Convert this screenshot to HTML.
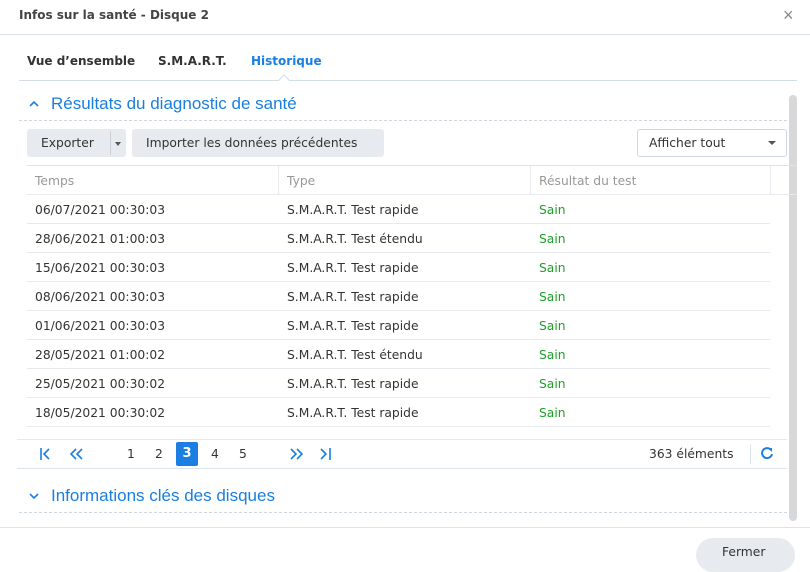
<!DOCTYPE html><html><head><style>
body{margin:0;width:810px;height:562px;background:#fff;font-family:"DejaVu Sans","Liberation Sans",sans-serif;position:relative;overflow:hidden;color:#333}
.a{position:absolute}
.t{font-size:12.3px;white-space:nowrap}
.row{position:absolute;left:27px;width:743px;height:28px;border-bottom:1px solid #e6eaee;font-size:12.3px;white-space:nowrap}
.row span{position:absolute;top:8px}
.h{font-family:"Liberation Sans",sans-serif;font-size:17px;color:#1a7fe0}
</style></head><body>
<div class="a t" style="left:19px;top:8px;font-weight:bold;color:#444;font-size:12px">Infos sur la santé - Disque 2</div>
<div class="a" style="left:783px;top:5px;font-size:18px;color:#888;font-family:'Liberation Sans'">×</div>
<div class="a" style="left:0;top:34px;width:810px;height:1px;background:#dde3ea"></div>
<div class="a t" style="left:27px;top:54px;font-weight:bold;color:#333;font-size:12px">Vue d’ensemble</div>
<div class="a t" style="left:158px;top:54px;font-weight:bold;color:#333;font-size:12px">S.M.A.R.T.</div>
<div class="a t" style="left:251px;top:54px;font-weight:bold;color:#1a7fe0;font-size:12px">Historique</div>
<div class="a" style="left:19px;top:80px;width:778px;height:1px;background:#d4dde6"></div>
<div class="a" style="left:280px;top:76px;width:7px;height:7px;background:#fff;border-left:1px solid #d4dde6;border-top:1px solid #d4dde6;transform:rotate(45deg)"></div>
<div class="a" style="left:789px;top:95px;width:8px;height:426px;background:#d8d8d8;border-radius:4px"></div>
<svg class="a" style="left:28px;top:99px" width="12" height="10"><path d="M2 7L6 3L10 7" stroke="#1a7fe0" stroke-width="1.6" fill="none"/></svg>
<div class="a h" style="left:51px;top:94px">Résultats du diagnostic de santé</div>
<div class="a" style="left:19px;top:120px;width:778px;border-top:1px dashed #cfd8e0"></div>
<div class="a" style="left:27px;top:129px;width:99px;height:28px;background:#e7ebef;border-radius:3px"></div>
<div class="a t" style="left:41px;top:136px;color:#333">Exporter</div>
<div class="a" style="left:110px;top:131px;width:1px;height:24px;background:#c8d0d8"></div>
<div class="a" style="left:115px;top:142px;border:3px solid transparent;border-top:4px solid #555"></div>
<div class="a" style="left:132px;top:129px;width:252px;height:28px;background:#e7ebef;border-radius:3px"></div>
<div class="a t" style="left:146px;top:136px">Importer les données précédentes</div>
<div class="a" style="left:637px;top:129px;width:148px;height:26px;border:1px solid #cfd7df;border-radius:3px"></div>
<div class="a t" style="left:649px;top:136px">Afficher tout</div>
<div class="a" style="left:768px;top:141px;border:4px solid transparent;border-top:4px solid #555"></div>
<div class="a" style="left:27px;top:165px;width:770px;height:1px;background:#dde3ea"></div>
<div class="row" style="top:166px;width:770px;color:#999"><span style="left:8px">Temps</span><span style="left:260px">Type</span><span style="left:512px">Résultat du test</span></div>
<div class="a" style="left:278px;top:166px;width:1px;height:29px;background:#e6eaee"></div>
<div class="a" style="left:530px;top:166px;width:1px;height:29px;background:#e6eaee"></div>
<div class="a" style="left:770px;top:166px;width:1px;height:29px;background:#e6eaee"></div>
<div class="row" style="top:195px"><span style="left:8px">06/07/2021 00:30:03</span><span style="left:260px">S.M.A.R.T. Test rapide</span><span style="left:512px;color:#1e9e2a">Sain</span></div>
<div class="row" style="top:224px"><span style="left:8px">28/06/2021 01:00:03</span><span style="left:260px">S.M.A.R.T. Test étendu</span><span style="left:512px;color:#1e9e2a">Sain</span></div>
<div class="row" style="top:253px"><span style="left:8px">15/06/2021 00:30:03</span><span style="left:260px">S.M.A.R.T. Test rapide</span><span style="left:512px;color:#1e9e2a">Sain</span></div>
<div class="row" style="top:282px"><span style="left:8px">08/06/2021 00:30:03</span><span style="left:260px">S.M.A.R.T. Test rapide</span><span style="left:512px;color:#1e9e2a">Sain</span></div>
<div class="row" style="top:311px"><span style="left:8px">01/06/2021 00:30:03</span><span style="left:260px">S.M.A.R.T. Test rapide</span><span style="left:512px;color:#1e9e2a">Sain</span></div>
<div class="row" style="top:340px"><span style="left:8px">28/05/2021 01:00:02</span><span style="left:260px">S.M.A.R.T. Test étendu</span><span style="left:512px;color:#1e9e2a">Sain</span></div>
<div class="row" style="top:369px"><span style="left:8px">25/05/2021 00:30:02</span><span style="left:260px">S.M.A.R.T. Test rapide</span><span style="left:512px;color:#1e9e2a">Sain</span></div>
<div class="row" style="top:398px"><span style="left:8px">18/05/2021 00:30:02</span><span style="left:260px">S.M.A.R.T. Test rapide</span><span style="left:512px;color:#1e9e2a">Sain</span></div>
<div class="a" style="left:17px;top:439px;width:770px;height:1px;background:#e6eaee"></div>
<div class="a" style="left:17px;top:468px;width:770px;height:1px;background:#dde3ea"></div>
<svg class="a" style="left:38px;top:446px" width="300" height="16" fill="none" stroke="#1a7fe0" stroke-width="1.6">
<path d="M3 2V14M11 3L6 8L11 13"/><path d="M38 3L33 8L38 13M44 3L39 8L44 13"/>
<path d="M253 3L258 8L253 13M259 3L264 8L259 13"/><path d="M283 3L288 8L283 13M292 2V14"/></svg>
<div class="a t" style="left:127px;top:447px">1</div>
<div class="a t" style="left:155px;top:447px">2</div>
<div class="a" style="left:176px;top:442px;width:22px;height:24px;background:#1a7fe0;border-radius:2px;color:#fff;font-size:13px;font-weight:bold;text-align:center;line-height:24px">3</div>
<div class="a t" style="left:211px;top:447px">4</div>
<div class="a t" style="left:239px;top:447px">5</div>
<div class="a t" style="left:649px;top:447px">363 éléments</div>
<div class="a" style="left:750px;top:444px;width:1px;height:20px;background:#dde3ea"></div>
<svg class="a" style="left:760px;top:446px" width="14" height="14"><path d="M11 4A5 5 0 1 0 12 8" stroke="#1a7fe0" stroke-width="2" fill="none"/><path d="M8 2L12 2L12 6Z" fill="#1a7fe0"/></svg>
<svg class="a" style="left:28px;top:491px" width="12" height="10"><path d="M2 3L6 7L10 3" stroke="#1a7fe0" stroke-width="1.6" fill="none"/></svg>
<div class="a h" style="left:51px;top:486px">Informations clés des disques</div>
<div class="a" style="left:19px;top:512px;width:778px;border-top:1px dashed #cfd8e0"></div>
<div class="a" style="left:0;top:527px;width:810px;height:1px;background:#dde3ea"></div>
<div class="a" style="left:696px;top:538px;width:99px;height:34px;background:#e7ebef;border-radius:17px"></div>
<div class="a t" style="left:722px;top:545px">Fermer</div>
</body></html>
